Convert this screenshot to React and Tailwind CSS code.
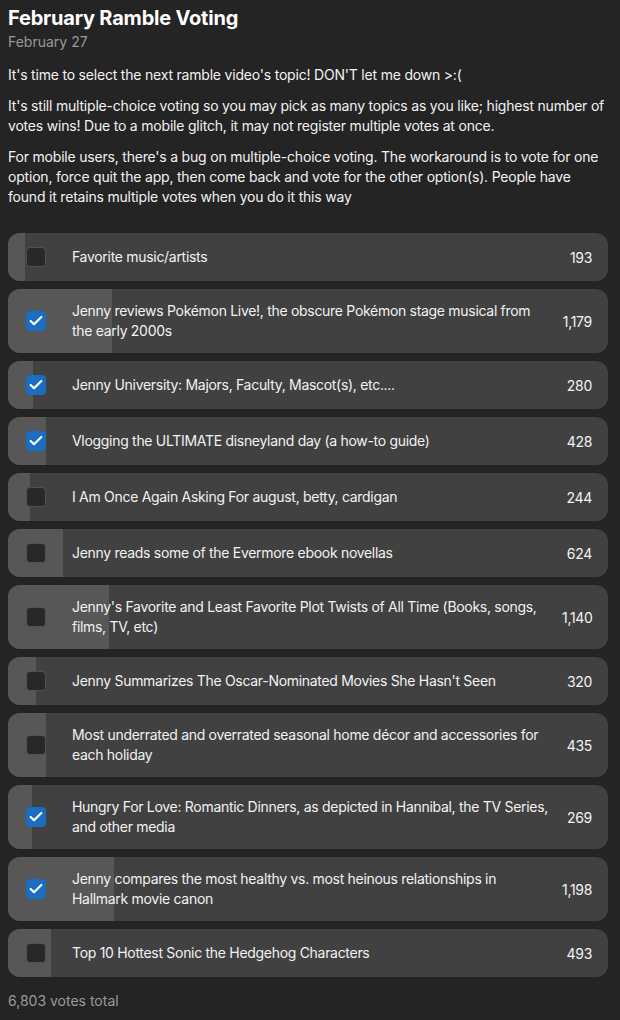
import { Check } from 'lucide-react'

const TOTAL = 6803

const OPTIONS = [
  { label: 'Favorite music/artists', votes: 193, checked: false },
  { label: 'Jenny reviews Pokémon Live!, the obscure Pokémon stage musical from the early 2000s', votes: 1179, checked: true },
  { label: 'Jenny University: Majors, Faculty, Mascot(s), etc....', votes: 280, checked: true },
  { label: 'Vlogging the ULTIMATE disneyland day (a how-to guide)', votes: 428, checked: true },
  { label: 'I Am Once Again Asking For august, betty, cardigan', votes: 244, checked: false },
  { label: 'Jenny reads some of the Evermore ebook novellas', votes: 624, checked: false },
  { label: "Jenny's Favorite and Least Favorite Plot Twists of All Time (Books, songs, films, TV, etc)", votes: 1140, checked: false },
  { label: "Jenny Summarizes The Oscar-Nominated Movies She Hasn't Seen", votes: 320, checked: false },
  { label: 'Most underrated and overrated seasonal home décor and accessories for each holiday', votes: 435, checked: false },
  { label: 'Hungry For Love: Romantic Dinners, as depicted in Hannibal, the TV Series, and other media', votes: 269, checked: true },
  { label: 'Jenny compares the most healthy vs. most heinous relationships in Hallmark movie canon', votes: 1198, checked: true },
  { label: 'Top 10 Hottest Sonic the Hedgehog Characters', votes: 493, checked: false },
]

function PollRow({ option }) {
  const pct = (option.votes / TOTAL) * 100
  return (
    <div className="relative overflow-hidden rounded-xl bg-[#414141]">
      {/* vote share fill */}
      <div className="absolute inset-y-0 left-0 bg-[#575757]" style={{ width: `${pct}%` }} />
      <div className="relative flex items-center min-h-[48px] py-3 pl-[18px] pr-4">
        {option.checked ? (
          <span className="w-5 h-5 shrink-0 rounded-[4px] bg-[#1a6dc0] flex items-center justify-center">
            <Check size={16} strokeWidth={3.2} className="text-white" />
          </span>
        ) : (
          <span className="w-5 h-5 shrink-0 rounded-[4px] bg-[#282828] border border-[#505050]" />
        )}
        <span className="flex-1 ml-[26px] pr-2 text-[14px] leading-5 tracking-[-0.3px] text-[#f2f2f2]">{option.label}</span>
        <span className="shrink-0 w-[30px] text-right text-[14px] tracking-[-0.3px] text-[#f2f2f2]">{option.votes.toLocaleString('en-US')}</span>
      </div>
    </div>
  )
}

export default function App() {
  return (
    <div className="min-h-screen bg-[#242424] pl-2 pr-3 pt-[5px] pb-4 font-['Inter',sans-serif]">
      <h1 className="text-[20px] leading-[26px] font-bold text-white tracking-[-0.2px]">February Ramble Voting</h1>
      <p className="text-[14px] leading-[20px] text-[#9a9a9a] mt-[1px]">February 27</p>

      <div className="mt-[13px] max-w-[598px] text-[14px] leading-[20px] tracking-[-0.2px] text-[#f2f2f2] space-y-[11px]">
        <p>It's time to select the next ramble video's topic! DON'T let me down &gt;:(</p>
        <p>
          It's still multiple-choice voting so you may pick as many topics as you like; highest number of
          votes wins! Due to a mobile glitch, it may not register multiple votes at once.
        </p>
        <p>
          For mobile users, there's a bug on multiple-choice voting. The workaround is to vote for one
          option, force quit the app, then come back and vote for the other option(s). People have
          found it retains multiple votes when you do it this way
        </p>
      </div>

      <div className="mt-[26px] flex flex-col gap-2">
        {OPTIONS.map((o, i) => (
          <PollRow key={i} option={o} />
        ))}
      </div>

      <p className="mt-[13px] text-[14px] text-[#9a9a9a]">6,803 votes total</p>
    </div>
  )
}
